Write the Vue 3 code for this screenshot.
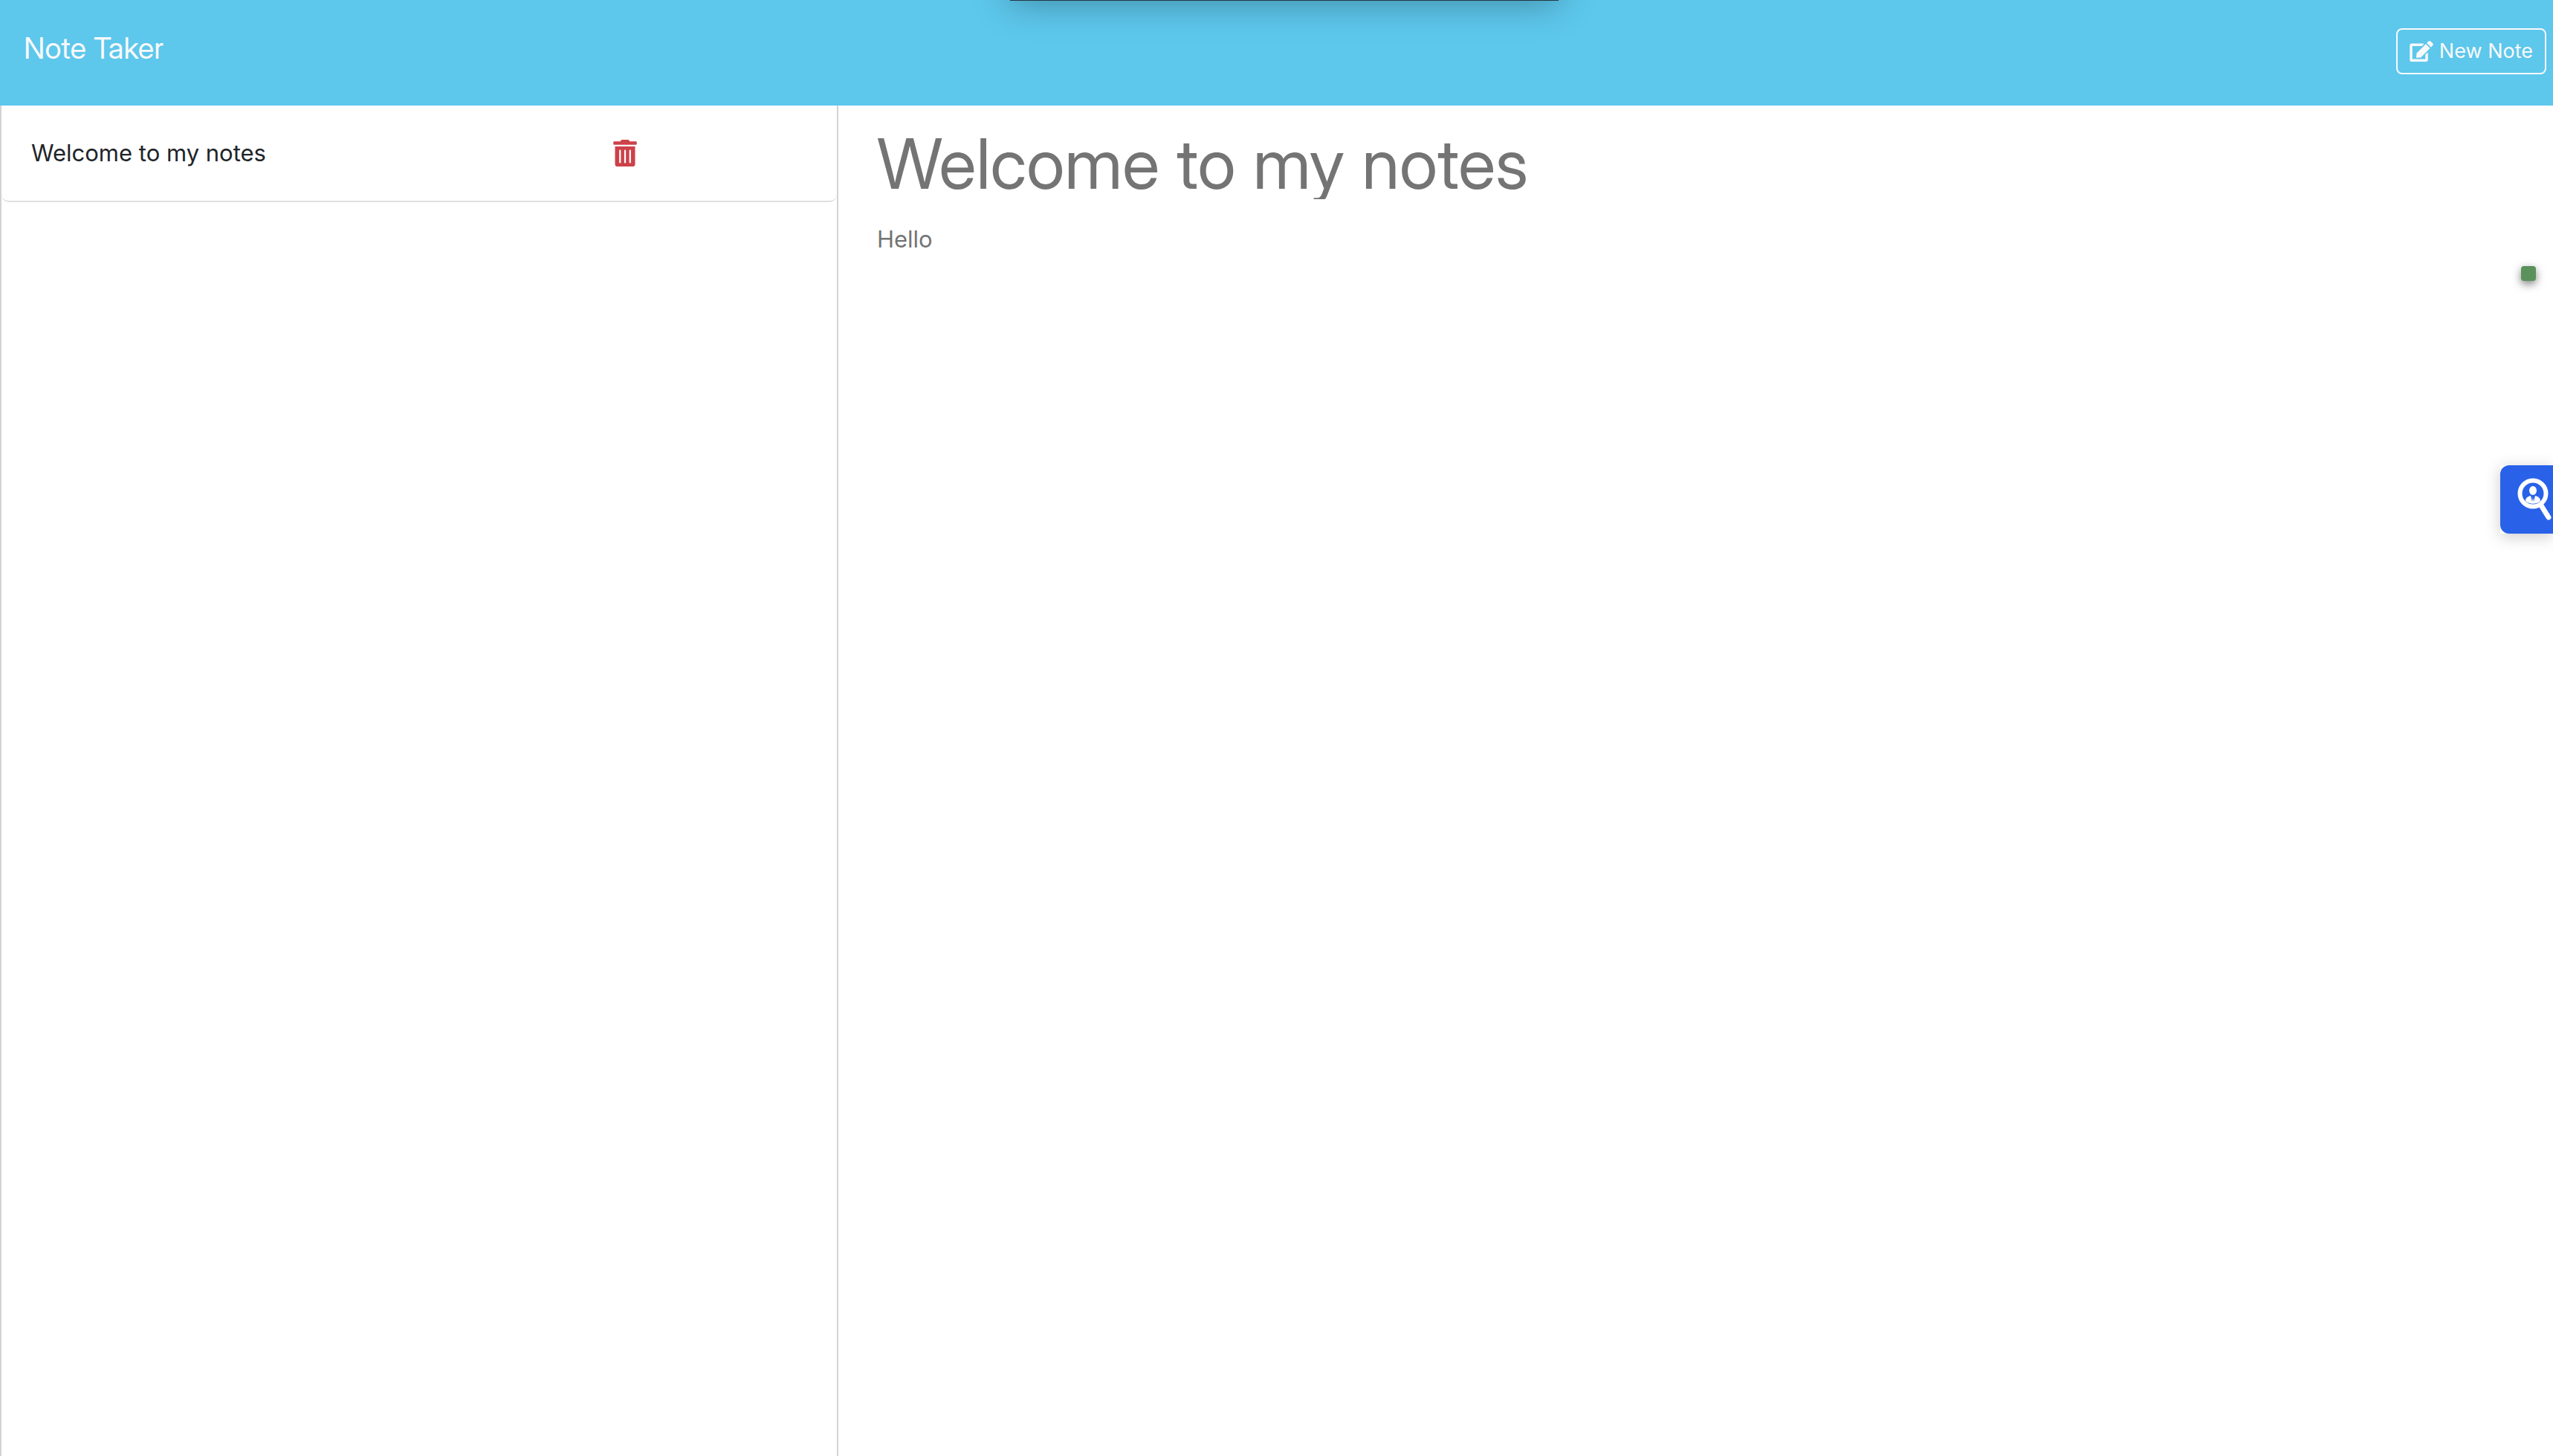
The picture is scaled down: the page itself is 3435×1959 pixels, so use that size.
<script setup>
import { ref } from 'vue'

const notes = ref([{ id: 1, title: 'Welcome to my notes', text: 'Hello' }])
const active = ref(notes.value[0])

function remove(id) {
  notes.value = notes.value.filter((note) => note.id !== id)
}

function startNote() {
  active.value = { id: Date.now(), title: '', text: '' }
}
</script>

<template>
  <div class="page">
    <header class="navbar">
      <a class="brand" href="#">Note Taker</a>
      <button class="new-note" type="button" @click="startNote">
        <svg class="edit-icon" viewBox="0 0 576 512" aria-hidden="true">
          <path d="M402.6 83.2l90.2 90.2c3.800 3.800 3.800 10 0 13.800L274.400 405.600l-92.800 10.300c-12.400 1.400-22.900-9.100-21.500-21.500l10.300-92.800L388.800 83.200c3.800-3.800 10-3.800 13.800 0zm162-22.900l-48.800-48.800c-15.200-15.200-39.900-15.200-55.200 0l-35.400 35.400c-3.800 3.800-3.800 10 0 13.800l90.200 90.200c3.800 3.800 10 3.800 13.800 0l35.400-35.400c15.200-15.300 15.200-40 0-55.200zM384 346.200V448H64V128h229.800c3.200 0 6.200-1.300 8.500-3.500l40-40c7.600-7.600 2.200-20.500-8.500-20.500H48C21.500 64 0 85.500 0 112v352c0 26.500 21.500 48 48 48h352c26.500 0 48-21.500 48-48V306.200c0-10.700-12.900-16-20.500-8.500l-40 40c-2.200 2.300-3.500 5.300-3.500 8.500z" />
        </svg>
        New Note
      </button>
    </header>

    <main class="workspace">
      <nav class="sidebar" aria-label="Notes">
        <ul class="note-list">
          <li v-for="note in notes" :key="note.id" class="note-item">
            <span class="note-name" @click="active = note">{{ note.title }}</span>
            <button class="delete" type="button" aria-label="Delete note" @click="remove(note.id)">
              <svg class="trash-icon" viewBox="0 0 448 512" aria-hidden="true">
                <path d="M32 464a48 48 0 0 0 48 48h288a48 48 0 0 0 48-48V128H32zm272-256a16 16 0 0 1 32 0v224a16 16 0 0 1-32 0zm-96 0a16 16 0 0 1 32 0v224a16 16 0 0 1-32 0zm-96 0a16 16 0 0 1 32 0v224a16 16 0 0 1-32 0zM432 32H312l-9.400-18.700A24 24 0 0 0 281.100 0H166.800a23.720 23.720 0 0 0-21.400 13.300L136 32H16A16 16 0 0 0 0 48v32a16 16 0 0 0 16 16h416a16 16 0 0 0 16-16V48a16 16 0 0 0-16-16z" />
              </svg>
            </button>
          </li>
        </ul>
      </nav>

      <section class="editor">
        <input v-model="active.title" class="note-title" type="text" aria-label="Note title" readonly />
        <textarea v-model="active.text" class="note-text" aria-label="Note text" readonly></textarea>
      </section>
    </main>

    <div class="top-panel"></div>
    <div class="status-dot"></div>
    <div class="lookup-wrap">
      <button class="lookup" type="button" aria-label="Look up contact">
        <svg class="lookup-icon" viewBox="0 0 48 58" aria-hidden="true">
          <path d="M32 37L42 53" stroke="#fff" stroke-width="7" stroke-linecap="round" />
          <circle cx="21" cy="21" r="17.500" fill="none" stroke="#fff" stroke-width="6" />
          <ellipse cx="21" cy="17" rx="5" ry="6" fill="#fff" />
          <path d="M11 31c0-4 3-6 7-7l2 8 1-6 1 6 2-8c4 1 7 3 7 7-5 5-15 5-20 0z" fill="#fff" />
        </svg>
      </button>
    </div>
  </div>
</template>

<style>
body {
  margin: 0;
  background: #fff;
}
</style>

<style scoped>
.page {
  position: relative;
  display: flex;
  flex-direction: column;
  min-height: 100vh;
  overflow: hidden;
  color: #212529;
  font: 31px/48px Inter, "Liberation Sans", sans-serif;
}

.page * {
  box-sizing: border-box;
}

button,
input,
textarea {
  margin: 0;
  padding: 0;
  border: 0;
  background: none;
  color: inherit;
  font: inherit;
}

.navbar {
  display: flex;
  align-items: flex-start;
  justify-content: space-between;
  height: 142px;
  padding: 35px 9px 0 32px;
  background: #5dc7ec;
  color: #f8f9fa;
}

.brand {
  color: inherit;
  font-family: "Inter Display", Inter, "Liberation Sans", sans-serif;
  font-size: 40px;
  line-height: 60px;
  text-decoration: none;
}

.new-note {
  display: flex;
  align-items: center;
  gap: 8px;
  margin-top: 3px;
  padding: 8px 16px;
  border: 2px solid #f8f9fa;
  border-radius: 8px;
  font-size: 27px;
  line-height: 42px;
}

.edit-icon {
  width: 32px;
  height: 28px;
  fill: currentColor;
}

.workspace {
  display: flex;
  flex: 1;
}

.sidebar {
  width: calc(100% / 3 - 17px);
  border: solid #d3d3d3;
  border-width: 0 2px;
}

.note-list {
  margin: 0;
  padding: 0;
  list-style: none;
}

.note-item {
  display: flex;
  align-items: center;
  height: 130px;
  padding: 0 40px;
  border-bottom: 2px solid #dfdfdf;
  border-radius: 0 0 10px 10px;
}

.note-name {
  flex: 1;
}

.delete {
  display: flex;
  width: 25%;
  color: #cd4149;
}

.trash-icon {
  width: 32px;
  height: 36px;
  fill: currentColor;
}

.editor {
  display: flex;
  flex: 1;
  flex-direction: column;
  padding: 30px 52px;
  color: #747474;
}

.note-title {
  width: 100%;
  height: 96px;
  font-family: "Inter Display", Inter, "Liberation Sans", sans-serif;
  font-size: 93px;
  line-height: 96px;
}

.note-text {
  flex: 1;
  margin-top: 30px;
  outline: none;
  resize: none;
}

.top-panel {
  position: absolute;
  top: -79px;
  left: 50%;
  width: 738px;
  height: 80px;
  margin-left: -359px;
  background: #253740;
  box-shadow: 0 0 50px rgba(0, 0, 0, 0.35);
}

.status-dot {
  position: absolute;
  top: 358px;
  right: 23px;
  width: 20px;
  height: 20px;
  border-radius: 4px;
  background: #5b925c;
  box-shadow: 0 4px 12px rgba(0, 0, 0, 0.5);
}

.lookup-wrap {
  position: absolute;
  top: 626px;
  right: 0;
  background: #fff;
  box-shadow: 0 4px 20px rgba(0, 0, 0, 0.2);
}

.lookup {
  display: block;
  width: 71px;
  height: 92px;
  padding: 17px 0 17px 23px;
  border-radius: 12px 0 0 12px;
  background: #2962e9;
}

.lookup-icon {
  display: block;
  width: 48px;
  height: 58px;
}
</style>
